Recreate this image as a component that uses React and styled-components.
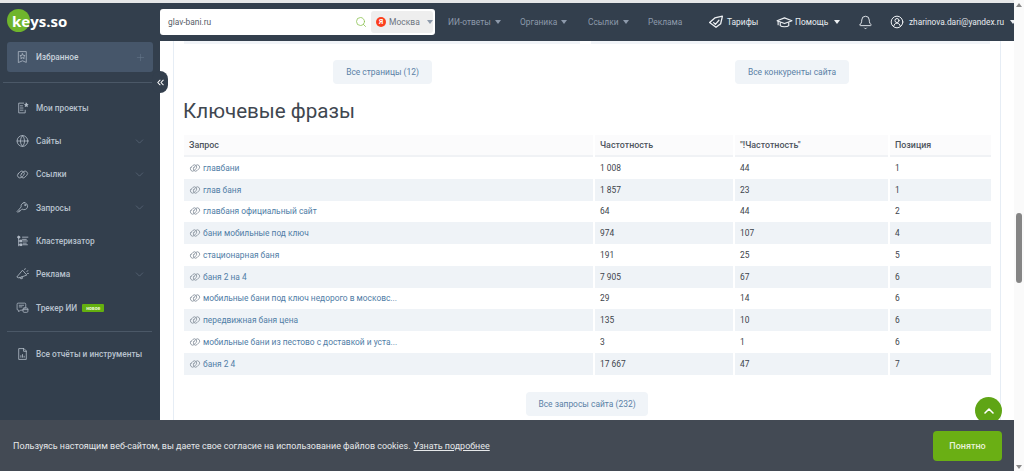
import React from "react";
import styled, { createGlobalStyle } from "styled-components";
import { Globe, ChevronDown, ChevronUp, Plus, Bell, ChevronsLeft, Search } from "lucide-react";

const Global = createGlobalStyle`
  html, body { margin: 0; padding: 0; height: 100%; overflow: hidden; background: #fff; }
  #root { height: 100%; }
  * { box-sizing: border-box; }
  body { font-family: Roboto, "Liberation Sans", sans-serif; }
`;

const Page = styled.div`
  width: 1024px; height: 471px; display: flex; overflow: hidden; position: relative;
  background: #fff;
`;
const Window = styled.div`
  width: 1014px; display: flex; flex-direction: column; background: #fff;
`;
const TopStrip = styled.div`
  height: 3px; flex: none; background: #e6e7e8;
`;
const ScrollTrack = styled.div`
  width: 10px; background: #fafafa; display: flex; flex-direction: column; align-items: center;
  justify-content: space-between; padding: 3px 0 2px;
`;
const ScrollArrow = styled.i`
  width: 0; height: 0; border-left: 3px solid transparent; border-right: 3px solid transparent;
  ${p => p.$down ? "border-top: 4px solid #8a8a8a;" : "border-bottom: 4px solid #8a8a8a;"}
`;
const ScrollThumb = styled.div`
  width: 6px; height: 70px; background: #858585; border-radius: 3px; margin-top: 206px; margin-bottom: auto;
`;
const Header = styled.header`
  height: 38px; background: #333f4d; display: flex; align-items: center; flex: none;
`;
const LogoBox = styled.div`
  width: 160px; height: 100%; display: flex; align-items: center; padding: 0 0 2px 7px; position: relative; flex: none;
`;
const LogoDot = styled.span`
  position: absolute; left: 7px; top: 6px; width: 23px; height: 23px; border-radius: 50%; background: #6fb52c;
`;
const LogoText = styled.span`
  position: relative; font: 700 15px "Open Sans", Roboto, sans-serif; color: #fff; padding-left: 5px;
`;
const SearchBox = styled.div`
  width: 275px; height: 26px; background: #fff; border-radius: 3px; display: flex; align-items: center;
  padding: 2px 2px 2px 8px; flex: none;
`;
const SearchText = styled.span`
  flex: 1; font-size: 8.4px; color: #555c66;
`;
const Region = styled.div`
  width: 62px; height: 22px; margin-left: 4px; background: #eeeeee; border-radius: 3px; display: flex; align-items: center;
  padding-left: 5px; gap: 3px; font-size: 8.5px; color: #6d7580;
`;
const YaBadge = styled.span`
  width: 10px; height: 10px; border-radius: 50%; background: #fc3f1d; color: #fff; font: 700 7px Roboto, sans-serif;
  display: inline-flex; align-items: center; justify-content: center;
`;
const Caret = styled.i`
  display: inline-block; width: 0; height: 0; border-left: 3.5px solid transparent; border-right: 3.5px solid transparent;
  border-top: 4px solid ${p => p.$light ? "#eef1f4" : "#8d9aab"}; margin-left: ${p => p.$gap || 4}px;
`;
const Nav = styled.nav`
  flex: 1; display: flex; align-items: center; padding-left: 13px; height: 100%; font-size: 8.4px;
`;
const NavItem = styled.span`
  color: #8d9aab; width: ${p => p.$w}px; flex: none; white-space: nowrap; display: flex; align-items: center;
`;
const NavLight = styled.span`
  color: #e9edf1; flex: none; white-space: nowrap; display: flex; align-items: center; width: ${p => p.$w}px; gap: ${p => p.$gap || 0}px;
`;
const Email = styled.span`
  font-size: 8.3px;
`;
const Body = styled.div`
  flex: 1; min-height: 0; display: flex;
`;
const Side = styled.aside`
  width: 160px; background: #333f4d; flex: none; position: relative; padding: 1px 0 0;
`;
const Fav = styled.div`
  margin: 0 7px; height: 30px; background: #46566a; border-radius: 3px; display: flex; align-items: center;
  padding: 0 7px 0 9px; gap: 7px; color: #c9d2dc; font-size: 8.3px; font-weight: 500;
`;
const Grow = styled.span`
  flex: 1; white-space: nowrap;
`;
const Rule = styled.div`
  height: 1px; background: #4b5867; margin: ${p => p.$m};
`;
const Handle = styled.div`
  position: absolute; left: 152px; top: 30px; width: 16px; height: 22px; border-radius: 8px;
  background: #333f4d; color: #fff; display: flex; align-items: center; justify-content: center;
`;
const Menu = styled.div`
  display: flex; flex-direction: column;
`;
const Item = styled.div`
  height: 33.35px; display: flex; align-items: center; padding: 0 14px 0 16px; gap: 7px;
  color: #b8c2ce; font-size: 8.3px; font-weight: 500; flex: none;
`;
const IconSlot = styled.span`
  width: 13px; height: 14px; display: inline-flex; align-items: center; justify-content: center; flex: none; color: #b3bcc7;
`;
const NewTag = styled.span`
  background: #64b00f; color: #e8f5d8; font-size: 5px; font-weight: 700; padding: 1px 4px; border-radius: 1px; margin-left: -2px;
`;
const Main = styled.main`
  flex: 1; min-width: 0; position: relative; overflow: hidden; padding: 0 13px;
`;
const Card = styled.div`
  border-left: 1px solid #e6edf5; border-right: 1px solid #e6edf5; height: 100%; padding: 0 10px;
`;
const Stubs = styled.div`
  display: flex; justify-content: space-between;
`;
const Stub = styled.div`
  height: 3px; background: #f1f4f8; width: ${p => p.$w}px;
`;
const ButtonRow = styled.div`
  display: flex; margin-top: ${p => p.$top}px; padding-left: ${p => p.$left}px;
`;
const LightButton = styled.div`
  height: 24px; width: ${p => p.$w}px; margin-left: ${p => p.$offset || 0}px; background: #f0f4f8; border-radius: 4px; display: flex; align-items: center;
  justify-content: center; color: #5a81a6; font-size: 8.45px; flex: none;
`;
const Title = styled.h2`
  margin: 13px 0 0 -1px; font-size: 20.6px; font-weight: 400; color: #3f4750; line-height: 28px;
`;
const Table = styled.div`
  margin-top: 10px; width: 807px; font-size: 8.4px; color: #3d444c;
`;
const Row = styled.div`
  display: grid; grid-template-columns: 409px 138px 153px 101px; column-gap: 2px; height: 21.75px;
`;
const HeadRow = styled(Row)`
  height: 22px;
`;
const HeadCell = styled.div`
  background: #fbfbfc; border-bottom: 2px solid #f0f2f5; display: flex; align-items: center; padding-left: 5px;
  font-weight: 500; font-size: 8.9px; color: #4d545c;
`;
const Cell = styled.div`
  background: ${p => p.$alt ? "#eff3f7" : "#fff"}; display: flex; align-items: center; padding-left: 5px;
`;
const QueryLink = styled.span`
  color: #4f7da6; margin-left: 2px; white-space: nowrap;
`;
const ToTop = styled.div`
  position: absolute; left: 815px; top: 356px; width: 27px; height: 27px; border-radius: 50%; background: #5fa515; color: #fff;
  display: flex; align-items: center; justify-content: center;
`;
const Cookie = styled.div`
  position: absolute; left: 0; top: 420px; width: 1014px; height: 51px; background: #434a54; display: flex; align-items: center;
  justify-content: space-between; padding: 0 12px 0 13px; color: #e6e8ea; font-size: 8.95px;
`;
const CookieLink = styled.span`
  text-decoration: underline; margin-left: 3px;
`;
const CookieBtn = styled.div`
  width: 69px; height: 30px; background: #6aaf14; border-radius: 4px; display: flex; align-items: center; justify-content: center;
  color: #e8f2d8; font-size: 9px; font-weight: 500;
`;

const S = ({ size = 14, children, color = "currentColor", sw = 1.1 }) => (
  <svg width={size} height={size} viewBox="0 0 24 24" fill="none" stroke={color} strokeWidth={sw} strokeLinecap="round" strokeLinejoin="round">{children}</svg>
);
const Chain = ({ size = 14, sw = 1.7, color = "currentColor" }) => (
  <S size={size} sw={sw} color={color}>
    <rect x="2" y="7.5" width="14" height="9" rx="4.5" transform="rotate(-45 9 12)" />
    <rect x="8" y="7.5" width="14" height="9" rx="4.5" transform="rotate(-45 15 12)" />
  </S>
);
const Bookmark = () => (
  <S size={18} sw={1.4}><path d="M5 2h14v20l-7-3-7 3z" /><path d="m12 6 1.5 3 3.3.4-2.4 2.3.6 3.3-3-1.6-3 1.6.6-3.3-2.4-2.3 3.3-.4z" /></S>
);
const Projects = () => (
  <S size={16} sw={1.5}><path d="M14 3H5v18h12v-5" /><path d="M8 8h4M8 12h5M8 16h5" /><path d="m19 3 1 2.2 2.2.3-1.6 1.6.4 2.3-2-1.1-2 1.1.4-2.3L16 5.5l2.2-.3z" fill="currentColor" /></S>
);
const KeyIcon = () => (
  <S size={15} sw={1.5}><path d="M15 3a6.5 6.5 0 1 1-3.6 11.9L9 17.3H6.8v2.2H4.6L3.5 21 2 19.5 9.5 11A6.5 6.5 0 0 1 15 3z" /><circle cx="17" cy="7.5" r="1.2" /></S>
);
const Cluster = () => (
  <S size={15} sw={1.6}><circle cx="5" cy="4" r="2" fill="currentColor" /><path d="M5 6v14M5 11h4M5 18h4M12 4h10M12 8h7M13 11h8M13 15h6M13 18h8" /><rect x="8" y="9.5" width="3" height="3" fill="currentColor" /><rect x="8" y="16.5" width="3" height="3" fill="currentColor" /></S>
);
const Horn = () => (
  <S size={16} sw={1.5}><path d="M2 17 12 5l8 9-14 5z" /><path d="m7 18 2 3 3-1-1-3" /><path d="M16 4l1-2M20 7l2-1M21 11h2" /></S>
);
const Tracker = () => (
  <S size={16} sw={1.4}><path d="M18 12V5a2 2 0 0 0-2-2H4a2 2 0 0 0-2 2v9a2 2 0 0 0 2 2h1v3l3-3h4" /><path d="M6 7h8M6 10h5" /><rect x="13" y="12" width="9" height="8" rx="2" /><path d="M13 15h9" /></S>
);
const Doc = () => (
  <S size={14} sw={1.5}><path d="M14 2H5v20h14V7z" /><path d="M14 2v5h5" /><path d="M9 18v-3M12 18v-5M15 18v-2" /></S>
);
const Tag = () => (
  <S size={14} sw={2.2} color="#eef1f4"><path d="M1 13 10 5l13-3-3 13-8 6z" /><path d="m8 13 3 3 6-7" /></S>
);
const Cap = () => (
  <S size={17} sw={1.6} color="#eef1f4"><path d="m1.5 9.5 10.5-4 10.5 4-10.5 4z" /><path d="M6 12v4.5c2 2 10 2 12 0V12" /><path d="M3 10v5" /></S>
);
const User = () => (
  <S size={14} sw={1.7} color="#eef1f4"><circle cx="12" cy="12" r="10" /><circle cx="12" cy="9.5" r="3.5" /><path d="M6.5 19c.5-3 2.5-5 5.5-5s5 2 5.5 5" /></S>
);

const rows = [
  ["главбани", "1 008", "44", "1"],
  ["глав баня", "1 857", "23", "1"],
  ["главбаня официальный сайт", "64", "44", "2"],
  ["бани мобильные под ключ", "974", "107", "4"],
  ["стационарная баня", "191", "25", "5"],
  ["баня 2 на 4", "7 905", "67", "6"],
  ["мобильные бани под ключ недорого в московс...", "29", "14", "6"],
  ["передвижная баня цена", "135", "10", "6"],
  ["мобильные бани из пестово с доставкой и уста...", "3", "1", "6"],
  ["баня 2 4", "17 667", "47", "7"],
];

const Chev = () => <ChevronDown size={13} strokeWidth={1} color="#6a7889" />;

export default function App() {
  return (
    <Page>
      <Global />
      <Window>
        <TopStrip />
        <Header>
          <LogoBox><LogoDot /><LogoText>keys.so</LogoText></LogoBox>
          <SearchBox>
            <SearchText>glav-bani.ru</SearchText>
            <Search size={12} color="#8cc152" strokeWidth={1.6} />
            <Region>
              <YaBadge>Я</YaBadge>Москва<Caret />
            </Region>
          </SearchBox>
          <Nav>
            <NavItem $w={72}>ИИ-ответы<Caret /></NavItem>
            <NavItem $w={68}>Органика<Caret /></NavItem>
            <NavItem $w={60}>Ссылки<Caret /></NavItem>
            <NavItem $w={61}>Реклама</NavItem>
            <NavLight $w={67} $gap={4}><Tag />Тарифы</NavLight>
            <NavLight $w={82} $gap={2}><Cap /><span>Помощь</span><Caret $light /></NavLight>
            <NavLight $w={32}><Bell size={15} strokeWidth={1.5} /></NavLight>
            <NavLight $gap={5}><User /><Email>zharinova.dari@yandex.ru</Email><Caret $light $gap={1} /></NavLight>
          </Nav>
        </Header>
        <Body>
          <Side>
            <Fav>
              <IconSlot><Bookmark /></IconSlot>
              <Grow>Избранное</Grow>
              <Plus size={11} strokeWidth={1.2} color="#67788b" />
            </Fav>
            <Rule $m="10px 8px 8px 3px" />
            <Handle><ChevronsLeft size={11} strokeWidth={2.2} /></Handle>
            <Menu>
              <Item><IconSlot><Projects /></IconSlot><Grow>Мои проекты</Grow></Item>
              <Item><IconSlot><Globe size={14} strokeWidth={1.5} /></IconSlot><Grow>Сайты</Grow><Chev /></Item>
              <Item><IconSlot><Chain size={15} sw={1.4} /></IconSlot><Grow>Ссылки</Grow><Chev /></Item>
              <Item><IconSlot><KeyIcon /></IconSlot><Grow>Запросы</Grow><Chev /></Item>
              <Item><IconSlot><Cluster /></IconSlot><Grow>Кластеризатор</Grow></Item>
              <Item><IconSlot><Horn /></IconSlot><Grow>Реклама</Grow><Chev /></Item>
              <Item><IconSlot><Tracker /></IconSlot><span>Трекер ИИ</span><NewTag>новое</NewTag></Item>
            </Menu>
            <Rule $m="7px 8px 5px 7px" />
            <Item><IconSlot><Doc /></IconSlot><Grow>Все отчёты и инструменты</Grow></Item>
          </Side>
          <Main>
            <Card>
              <Stubs>
                <Stub $w={396} /><Stub $w={399} />
              </Stubs>
              <ButtonRow $top={16} $left={149}>
                <LightButton $w={99}>Все страницы (12)</LightButton>
                <LightButton $w={114} $offset={303}>Все конкуренты сайта</LightButton>
              </ButtonRow>
              <Title>Ключевые фразы</Title>
              <Table>
                <HeadRow>
                  <HeadCell>Запрос</HeadCell>
                  <HeadCell>Частотность</HeadCell>
                  <HeadCell>"!Частотность"</HeadCell>
                  <HeadCell>Позиция</HeadCell>
                </HeadRow>
                {rows.map((r, i) => (
                  <Row key={r[0]}>
                    <Cell $alt={i % 2 === 1}><Chain size={12} sw={1.7} color="#8c96a1" /><QueryLink>{r[0]}</QueryLink></Cell>
                    <Cell $alt={i % 2 === 1}>{r[1]}</Cell>
                    <Cell $alt={i % 2 === 1}>{r[2]}</Cell>
                    <Cell $alt={i % 2 === 1}>{r[3]}</Cell>
                  </Row>
                ))}
              </Table>
              <ButtonRow $top={17} $left={342}>
                <LightButton $w={122}>Все запросы сайта (232)</LightButton>
              </ButtonRow>
            </Card>
            <ToTop><ChevronUp size={16} strokeWidth={2.4} /></ToTop>
          </Main>
        </Body>
      </Window>
      <ScrollTrack>
        <ScrollArrow />
        <ScrollThumb />
        <ScrollArrow $down />
      </ScrollTrack>
      <Cookie>
        <span>Пользуясь настоящим веб-сайтом, вы даете свое согласие на использование файлов cookies.<CookieLink>Узнать подробнее</CookieLink></span>
        <CookieBtn>Понятно</CookieBtn>
      </Cookie>
    </Page>
  );
}
